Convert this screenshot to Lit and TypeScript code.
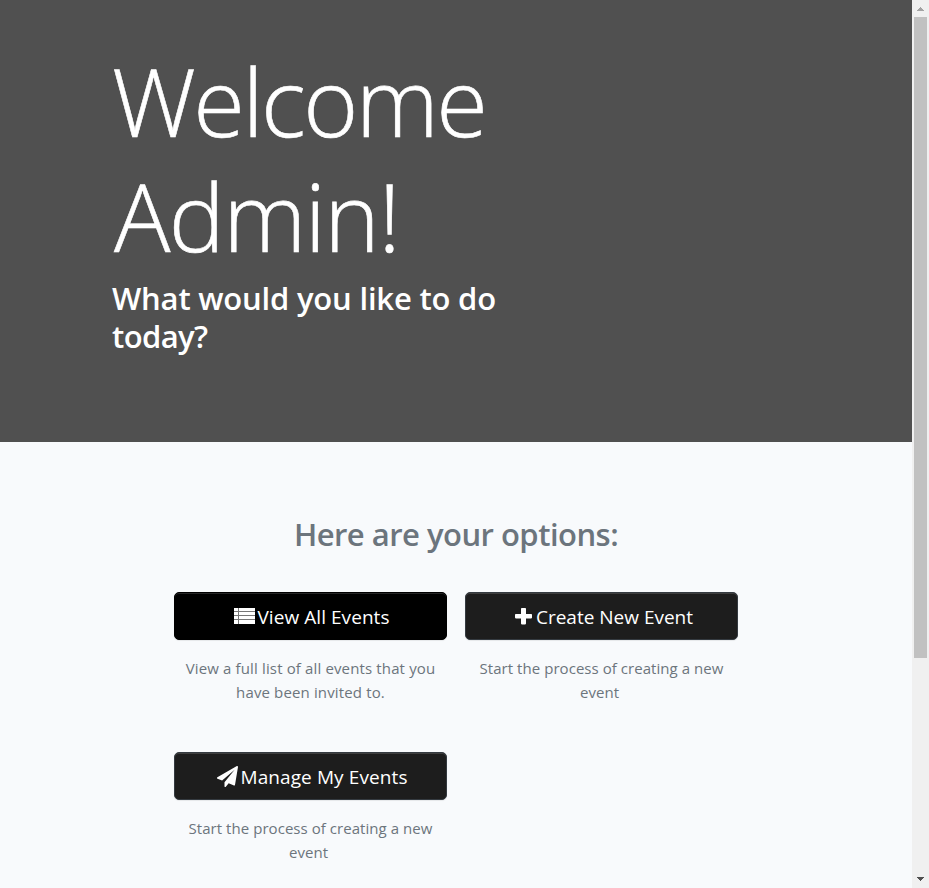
import { LitElement, html, css, svg } from "lit";

type IconName = "list" | "plus" | "plane";

interface Option {
  icon: IconName;
  label: string;
  lines: string[];
  active?: boolean;
}

const icons = {
  list: svg`<svg width="21" height="16" viewBox="0 0 21 16" shape-rendering="crispEdges">
    <path fill="#777" d="M0 3h21v1H0zM0 7h21v1H0zM0 11h21v1H0zM4 0h1v16H4z"/>
    <path fill="#fff" d="M0 0h4v3H0zM5 0h16v3H5zM0 4h4v3H0zM5 4h16v3H5zM0 8h4v3H0zM5 8h16v3H5zM0 12h4v4H0zM5 12h16v4H5z"/></svg>`,
  plus: svg`<svg width="17" height="17" viewBox="0 0 17 17">
    <path fill="#fff" d="M6.8 0h3.4q.8 0 .8.8V6h5.2q.8 0 .8.8v2.8q0 .8-.8.8H11v5.2q0 .8-.8.8H6.8q-.8 0-.8-.8v-5.2H.8q-.8 0-.8-.8V6.800Q0 6 .8 6H6V.8q0-.8.8-.8z"/></svg>`,
  plane: svg`<svg width="21" height="21" viewBox="0 0 1792 1792">
    <path fill="#fff" d="M1764 11q33 24 27 64l-256 1536q-5 29-32 45-14 8-31 8-11 0-24-5l-453-185-242 295q-18 23-49 23-13 0-22-4-19-7-30.500-23.500t-11.500-36.500v-349l864-1059-1069 925-395-162q-37-14-40-55-2-40 32-59l1664-960q15-9 32-9 20 0 36 11z"/></svg>`,
};

const options: Option[] = [
  { icon: "list", label: "View All Events", active: true, lines: ["View a full list of all events that you", "have been invited to."] },
  { icon: "plus", label: "Create New Event", lines: ["Start the process of creating a new", "event"] },
  { icon: "plane", label: "Manage My Events", lines: ["Start the process of creating a new", "event"] },
];

class AppRoot extends LitElement {
  static styles = css`
    :host {
      display: flex;
      height: 888px;
      overflow: hidden;
      background: #f8f9fa;
      font-family: "Open Sans", "Noto Sans", sans-serif;
      color: #6c757d;
    }
    * { box-sizing: border-box; margin: 0; }
    svg { display: block; flex: none; }
    .page { width: 912px; flex: none; background: #f8fafc; }
    .line { display: block; white-space: nowrap; }
    .hero { height: 442px; padding: 44px 0 0 112px; background: #505050; color: #fff; }
    .title { font-size: 94px; font-weight: 300; line-height: 115px; -webkit-text-stroke: 0.6px #fff; }
    .first { letter-spacing: -2.55px; }
    .second { letter-spacing: -1.6px; padding-left: 2px; }
    .question { margin-top: 5px; font-size: 31px; font-weight: 600; line-height: 38.400px; letter-spacing: -0.2px; }
    .tight { letter-spacing: -0.6px; }
    .heading {
      padding-top: 73px;
      text-align: center;
      font-size: 31px;
      font-weight: 600;
      line-height: 38px;
      letter-spacing: -0.52px;
    }
    .options {
      display: grid;
      grid-template-columns: 273px 273px;
      grid-auto-rows: 160px;
      column-gap: 18px;
      justify-content: center;
      margin-top: 39px;
    }
    .button {
      display: flex;
      width: 100%;
      height: 48px;
      align-items: center;
      justify-content: center;
      border: 1px solid #343a40;
      border-radius: 5px;
      background: #1d1d1d;
      box-shadow: inset 0 1px 0 rgba(255, 255, 255, 0.15), 0 1px 1px rgba(0, 0, 0, 0.075);
      color: #fff;
      font: 400 19px/28px "Open Sans", "Noto Sans", sans-serif;
      padding: 2px 0 0 4px;
      white-space: nowrap;
    }
    .button.active { background: #000; border-color: #000; padding-left: 3px; }
    .list, .plus, .plane { margin-top: -2px; }
    .list { margin-right: 2px; }
    .plus { margin-right: 4px; padding-left: 1px; }
    .plane { margin-right: 2px; }
    .label-list { letter-spacing: 0.06px; }
    .label-plane { letter-spacing: 0.1px; }
    .text {
      margin-top: 16px;
      text-align: center;
      font-size: 15px;
      line-height: 24px;
      letter-spacing: 0.05px;
    }
    .text.list-text { letter-spacing: 0.14px; }
    .plus-text .line + .line, .plane-text .line + .line { padding-right: 4px; }
    .scrollbar {
      width: 17px;
      flex: none;
      display: flex;
      flex-direction: column;
      align-items: center;
      background: #f0f0f0;
    }
    .arrow { width: 17px; height: 17px; }
    .thumb { width: 13px; height: 641px; background: #c1c1c1; }
    .down { margin-top: auto; }
  `;

  private renderOption(o: Option) {
    return html`<div>
      <button class="button ${o.active ? "active" : ""}">
        <span class=${o.icon}>${icons[o.icon]}</span><span class="label-${o.icon}">${o.label}</span>
      </button>
      <p class="text ${o.icon}-text">${o.lines.map((l) => html`<span class="line">${l}</span>`)}</p>
    </div>`;
  }

  render() {
    return html`
      <main class="page">
        <header class="hero">
          <h1 class="title"><span class="line first">Welcome</span><span class="line second">Admin!</span></h1>
          <h2 class="question"><span class="line">What would you like to do</span><span class="line tight">today?</span></h2>
        </header>
        <h2 class="heading">Here are your options:</h2>
        <section class="options">${options.map((o) => this.renderOption(o))}</section>
      </main>
      <aside class="scrollbar">
        <svg class="arrow" viewBox="0 0 17 17" shape-rendering="crispEdges"><path fill="#a3a3a3" d="M8 7h1v1h1v1h1v1h1v1H5v-1h1V9h1V8h1z"/></svg>
        <div class="thumb"></div>
        <svg class="arrow down" viewBox="0 0 17 17" shape-rendering="crispEdges"><path fill="#505050" d="M5 6h7v1h-1v1h-1v1H9v1H8V9H7V8H6V7H5z"/></svg>
      </aside>`;
  }
}

customElements.define("app-root", AppRoot);
